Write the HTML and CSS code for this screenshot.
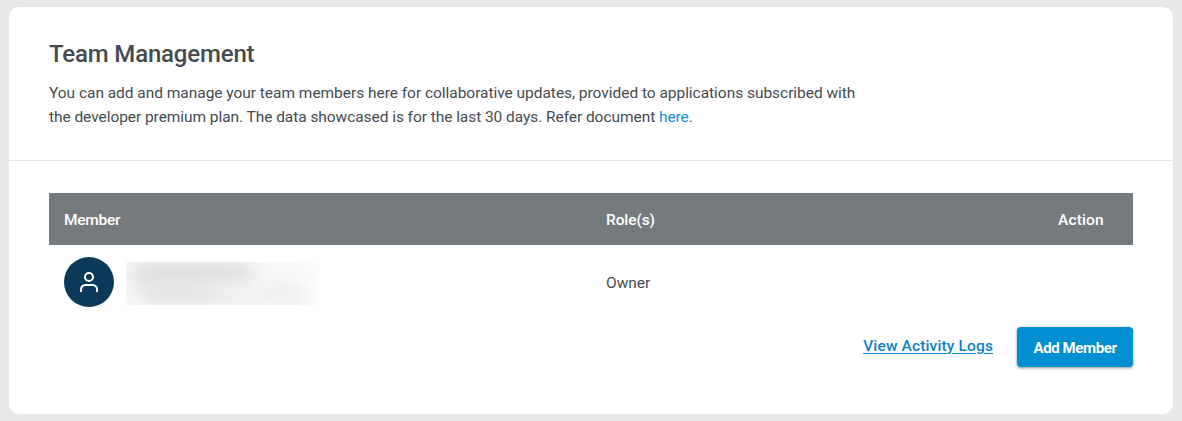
FILE: index.html
```html
<!DOCTYPE html>
<html lang="en">
<head>
<meta charset="utf-8">
<title>Team Management</title>
<link rel="stylesheet" href="styles.css">
</head>
<body>
<main class="card">
  <header class="card-header">
    <h1 class="title">Team Management</h1>
    <p class="description"><span class="line-one">You can add and manage your team members here for collaborative updates, provided to applications subscribed with</span><br><span class="line-two">the developer premium plan. The data showcased is for the last 30 days. Refer document <a class="link" href="#">here</a>.</span></p>
  </header>
  <section class="card-body">
    <div class="row table-head">
      <div><span class="head-member">Member</span></div>
      <div><span class="head-role">Role(s)</span></div>
      <div><span class="head-action">Action</span></div>
    </div>
    <div class="row table-row">
      <div class="member">
        <span class="avatar">
          <svg width="20" height="22" viewBox="0 0 20 22" fill="none" stroke="#fff" stroke-width="2">
            <circle cx="10" cy="6" r="4"/>
            <path d="M2 21v-2.500a4.500 4.500 0 0 1 4.500-4.500h7a4.500 4.500 0 0 1 4.500 4.500V21"/>
          </svg>
        </span>
        <span class="redacted"><span class="smudge smudge-name"></span><span class="smudge smudge-mail"></span></span>
      </div>
      <div class="owner">Owner</div>
      <div></div>
    </div>
    <div class="actions">
      <a class="logs" href="#">View Activity Logs</a>
      <button class="add" type="button">Add Member</button>
    </div>
  </section>
</main>
</body>
</html>
```
FILE: styles.css
```css
* { box-sizing: border-box; }
body {
  margin: 0;
  height: 421px;
  padding: 7px 9px;
  overflow: hidden;
  background: #e7e8ea;
  color: #444b51;
  font: 400 16px/24px Roboto, sans-serif;
}
.card {
  height: 407px;
  border-radius: 10px;
  background: #fff;
}
.card-header {
  height: 154px;
  padding: 31px 40px 0;
  border-bottom: 1px solid #e7e8ea;
}
.title {
  margin: 0 0 11px;
  font-size: 24px;
  line-height: 32px;
  font-weight: 500;
  letter-spacing: -0.17px;
}
.description {
  margin: 0;
  font-size: 15.5px;
  white-space: nowrap;
}
.line-one { letter-spacing: -0.035px; }
.line-two { letter-spacing: -0.06px; }
.link { color: #0c8fd3; text-decoration: none; }
.card-body { padding: 32px 40px 0; }
.row {
  display: grid;
  grid-template-columns: 542px 452px 1fr;
  align-items: center;
  padding-left: 15px;
}
.table-head {
  height: 52px;
  padding-top: 2px;
  background: #757a7e;
  color: #fff;
  font-size: 15.5px;
  font-weight: 500;
}
.head-member { letter-spacing: -0.25px; }
.head-role { letter-spacing: -0.1px; }
.head-action { letter-spacing: 0.15px; }
.table-row { height: 74px; }
.member { display: flex; align-items: center; gap: 12px; }
.avatar {
  display: flex;
  align-items: center;
  justify-content: center;
  width: 50px;
  height: 50px;
  border-radius: 50%;
  background: #0a395a;
}
.redacted {
  display: flex;
  flex-direction: column;
  justify-content: center;
  width: 193px;
  height: 43px;
  margin-top: 3px;
  overflow: hidden;
  background: linear-gradient(90deg, #f6f7f7 0%, #f6f6f7 60%, #fcfcfc 100%);
}
.smudge { flex: none; height: 20px; filter: blur(9px); }
.smudge-name { width: 116px; margin-left: 8px; background: #d9dadd; }
.smudge-mail { width: 162px; margin-left: 16px; background: linear-gradient(90deg, #e2e3e5 0%, #e2e3e5 35%, #f2f2f3 60%, #ebebed 90%); }
.owner { padding-top: 2px; font-size: 15.5px; }
.actions {
  display: flex;
  justify-content: flex-end;
  align-items: center;
  gap: 24px;
  padding-top: 8px;
}
.logs {
  margin-bottom: 3px;
  color: #0c83c5;
  font-size: 15.5px;
  font-weight: 500;
  letter-spacing: 0.14px;
  white-space: nowrap;
  text-underline-offset: 2px;
  text-decoration-thickness: 1px;
}
.add {
  width: 116px;
  height: 40px;
  padding: 2px 0 0;
  border: 0;
  border-radius: 4px;
  background: #008fd1;
  box-shadow: 0 1px 3px rgba(0,0,0,.45);
  color: #fff;
  font: 700 15px/24px Roboto, sans-serif;
  letter-spacing: -0.4px;
  white-space: nowrap;
}
```
